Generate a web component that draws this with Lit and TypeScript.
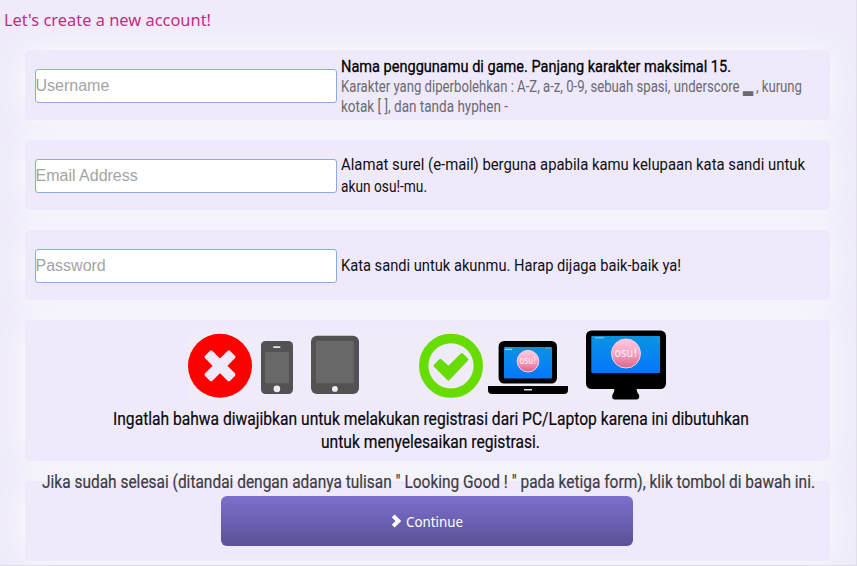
import { LitElement, html, css, svg } from "lit";
import { customElement } from "lit/decorators.js";

const line = (text: string, width: number, height: number, baseline: number, cls: string) => html`
  <svg class="line ${cls}" width=${width} height=${height}>
    <text x="0" y=${baseline} textLength=${width} lengthAdjust="spacingAndGlyphs">${text}</text>
  </svg>`;

const osu = (cx: number, cy: number, r: number, size: number) => svg`
  <circle cx=${cx} cy=${cy} r=${r} fill="url(#pink)" stroke="#f5d3e4" stroke-width="1"/>
  <text class="osu" x=${cx} y=${cy + size * 0.29} font-size=${size} text-anchor="middle"
    textLength=${r * 1.58} lengthAdjust="spacingAndGlyphs">osu!</text>`;

const devices = html`
  <svg class="devices" width="478" height="72" viewBox="188 330 478 72">
    <defs>
      <linearGradient id="pink" x1="0" y1="0" x2="0" y2="1">
        <stop offset="0" stop-color="#ffc9df"/><stop offset=".45" stop-color="#f9a9c8"/><stop offset="1" stop-color="#dc6488"/>
      </linearGradient>
      <linearGradient id="blue" x1="0" y1="0" x2="0" y2="1">
        <stop offset="0" stop-color="#0a92e0"/><stop offset=".5" stop-color="#0787f0"/><stop offset="1" stop-color="#0675fc"/>
      </linearGradient>
    </defs>
    <circle cx="220" cy="365.8" r="32" fill="#f00"/>
    <g fill="#efeafb">
      <rect x="202.3" y="360.6" width="35.4" height="10.4" rx="1.8" transform="rotate(45 220 365.8)"/>
      <rect x="202.3" y="360.6" width="35.4" height="10.4" rx="1.8" transform="rotate(-45 220 365.8)"/>
      <path d="M220 358.3l7.5 7.5-7.5 7.5-7.5-7.5z"/>
    </g>
    <rect x="261" y="341" width="32" height="53" rx="4.5" fill="#525252"/>
    <rect x="265" y="352" width="24" height="31.3" rx="1" fill="#686868"/>
    <rect x="273" y="346.2" width="7.6" height="1.7" rx=".8" fill="#e5e1ee"/>
    <circle cx="276.9" cy="388.9" r="3.3" fill="#efeafb"/>
    <rect x="311" y="335.8" width="48" height="58.2" rx="6" fill="#525252"/>
    <rect x="316" y="341" width="37.7" height="42.3" rx="1" fill="#686868"/>
    <circle cx="334.9" cy="388.9" r="2.9" fill="#efeafb"/>
    <circle cx="451" cy="365.8" r="27.3" fill="none" stroke="#66dc00" stroke-width="9.4"/>
    <path d="M441.3 359.2l7.2 6.5 12.3-12.2q1-.9 2 0l5.2 5q1 1 0 2l-18.5 19.6q-1.1 1.1-2.2 0l-13.3-13.3q-1-1 0-2l5.3-5.5q1-.9 2-.1z" fill="#66dc00"/>
    <rect x="498.6" y="341" width="58.4" height="42.6" rx="5.5"/>
    <rect x="504" y="347" width="48" height="31.4" rx="1" fill="url(#blue)"/>
    <path d="M505 348h8M545 348h6" stroke="#6cbbe9" stroke-width=".6"/>
    <path d="M505 349.5h7" stroke="#c5e7f9" stroke-width=".8"/>
    ${osu(528, 361.2, 10.8, 10)}
    <path d="M488 386h80v4q0 4-4 4h-72q-4 0-4-4z"/>
    <rect x="524" y="388.9" width="8" height="1.5" rx=".5" fill="#e5e1ee"/>
    <rect x="586" y="330.4" width="80" height="58.6" rx="5.5"/>
    <path d="M614 388h22.6q.2 5 2 6 1 2 .5 3.7-.5 1.8-2.5 1.8h-22q-2 0-2.4-1.8-.4-1.6.6-3.7 1.6-2 1.8-6z"/>
    <rect x="591.3" y="336" width="68.8" height="37" rx="1" fill="url(#blue)"/>
    <path d="M595 337.8h9" stroke="#8dd1f0" stroke-width="1"/>
    <path d="M659 343v-6h-6" stroke="#29a9df" stroke-width=".6" fill="none"/>
    ${osu(626, 353.5, 14.5, 13)}
  </svg>`;

@customElement("app-root")
export class AppRoot extends LitElement {
  static styles = css`
    :host { display: block; }
    .page {
      box-sizing: border-box; width: 857px; height: 566px; overflow: hidden;
      padding: 0 26px 0 25px; background: #efebfa;
      border-right: 1px solid #e2e0e9; border-bottom: 1px solid #dddce2;
      display: flex; flex-direction: column; gap: 20px;
      position: relative; z-index: 0;
      font-family: Roboto, "Noto Sans", sans-serif;
    }
    .title { height: 30px; margin: 0 0 0 -21px; font-weight: 400; }
    .panel {
      box-sizing: border-box; flex: none; width: 805px; height: 70px; border-radius: 5px;
      background: #efeafb; position: relative;
    }
    /* The glow sits behind every panel so neighbours are not tinted. */
    .panel::before {
      content: ""; position: absolute; inset: 0; z-index: -1; border-radius: 5px;
      box-shadow: 0 0 30px 3px #f9f9fc;
    }
    .field { display: flex; align-items: center; padding: 0 10px; gap: 4px; }
    .field input {
      box-sizing: border-box; width: 302px; height: 34px; margin: 2px 0 0; padding: 0;
      border: 1px solid #8eaae4; border-radius: 3px; background: #fff; outline: none;
      font: 16px "Liberation Sans", Arial, sans-serif; text-indent: -0.5px;
    }
    .field input::placeholder { color: #a4a4a4; opacity: 1; }
    .copy { display: flex; flex-direction: column; }
    .line { display: block; overflow: visible; fill: #101014; font-size: 17px; }
    .heading { fill: #c72b80; font: 17px "Noto Sans", sans-serif; }
    .strong { fill: #000; stroke: #000; stroke-width: .3px; }
    .small { fill: #6b6971; font-size: 16px; }
    .notice { height: 141px; padding: 10px 1px 0 0; display: flex; flex-direction: column; align-items: center; }
    .large { font-size: 18px; fill: #08080b; stroke: #08080b; stroke-width: .2px; margin-left: 7px; }
    .submit { height: 80px; padding-right: 1px; display: flex; flex-direction: column; align-items: center; }
    .hint { margin: -11px 0 0 3px; font-size: 18px; fill: #3d3b42; stroke: #3d3b42; stroke-width: .2px; }
    .devices { display: block; background: #f0ebf9; }
    .osu { fill: #fff0f7; font-family: "DejaVu Sans", sans-serif; }
    .button {
      width: 412px; height: 50px; margin-top: 1px; padding: 0; border: 0; border-radius: 6px;
      background: linear-gradient(#7b70cd, #5b5196);
      display: flex; align-items: center; justify-content: center; gap: 4px;
    }
    .label { fill: #fff; font: 15px "Noto Sans", sans-serif; }
    .arrow { display: block; margin-top: 0; }
  `;

  render() {
    return html`
      <main class="page">
        <h1 class="title">${line("Let's create a new account!", 207, 30, 26, "heading")}</h1>
        <section class="panel field">
          <input placeholder="Username" aria-label="Username" />
          <div class="copy">
            ${line("Nama penggunamu di game. Panjang karakter maksimal 15.", 390, 24, 19, "strong")}
            ${line("Karakter yang diperbolehkan : A-Z, a-z, 0-9, sebuah spasi, underscore ▂ , kurung", 461, 20, 15, "small")}
            ${line("kotak [ ], dan tanda hyphen -", 167, 20, 15, "small")}
          </div>
        </section>
        <section class="panel field">
          <input placeholder="Email Address" aria-label="Email Address" />
          <div class="copy">
            ${line("Alamat surel (e-mail) berguna apabila kamu kelupaan kata sandi untuk", 464, 22, 17, "")}
            ${line("akun osu!-mu.", 86, 22, 17, "")}
          </div>
        </section>
        <section class="panel field">
          <input type="password" placeholder="Password" aria-label="Password" />
          <div class="copy">${line("Kata sandi untuk akunmu. Harap dijaga baik-baik ya!", 340, 22, 17, "")}</div>
        </section>
        <section class="panel notice">
          ${devices}
          ${line("Ingatlah bahwa diwajibkan untuk melakukan registrasi dari PC/Laptop karena ini dibutuhkan", 636, 23, 23, "large")}
          ${line("untuk menyelesaikan registrasi.", 219, 23, 23, "large")}
        </section>
        <section class="panel submit">
          ${line('Jika sudah selesai (ditandai dengan adanya tulisan " Looking Good ! " pada ketiga form), klik tombol di bawah ini.', 773, 25, 18, "hint")}
          <button class="button">
            <svg class="arrow" width="11" height="14" viewBox="0 0 11 14"><path d="M2.2 1.8L7.4 7l-5.2 5.2" fill="none" stroke="#fff" stroke-width="4"/></svg>
            ${line("Continue", 57, 20, 15.5, "label")}
          </button>
        </section>
      </main>`;
  }
}
